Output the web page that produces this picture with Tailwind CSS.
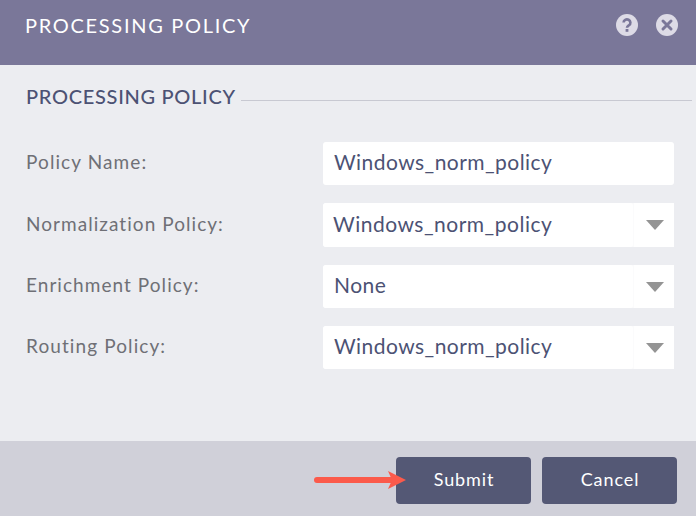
<!DOCTYPE html>
<html lang="en">
<head>
  <meta charset="UTF-8"/>
  <title>Processing Policy</title>
  <script src="https://cdn.jsdelivr.net/npm/@tailwindcss/browser@4"></script>
</head>
<body class="w-[696px] h-[516px] overflow-hidden bg-[#ecedf1] font-['Lato',sans-serif] flex flex-col">

  <!-- Header -->
  <header class="h-[65px] shrink-0 bg-[#7a7799] flex items-center justify-between pl-[25px] pr-[18px] pb-[16px]">
    <h1 class="text-[20px] leading-none text-white tracking-[1.7px]">PROCESSING POLICY</h1>
    <div class="flex items-center gap-[18px]">
      <svg class="w-[22px] h-[22px]" viewBox="0 0 22 22">
        <circle cx="11" cy="11" r="11" fill="#dddbe6"/>
        <path d="M7.6 8.6a3.4 3.2 0 1 1 5.4 2.6c-1.2.8-2 1.2-2 2.6" fill="none" stroke="#7a7799" stroke-width="2.6"/>
        <rect x="9.6" y="15" width="2.8" height="2.8" fill="#7a7799"/>
      </svg>
      <svg class="w-[22px] h-[22px]" viewBox="0 0 22 22">
        <circle cx="11" cy="11" r="11" fill="#dddbe6"/>
        <path d="M7 7l8 8M15 7l-8 8" fill="none" stroke="#7a7799" stroke-width="3" stroke-linecap="round"/>
      </svg>
    </div>
  </header>

  <!-- Form -->
  <main class="flex-1 pl-[26px] pr-[4px]">
    <div class="flex items-start h-[77px] pt-[20px]">
      <h2 class="text-[20px] leading-[23px] text-[#4c5274] font-medium tracking-[0.7px] whitespace-nowrap">PROCESSING POLICY</h2>
      <div class="flex-1 h-px bg-[#c8c9d2] ml-[5px] mt-[15px]"></div>
    </div>

    <div class="flex flex-col gap-[18px] pr-[18px]">
      <div class="flex items-center h-[43px]">
        <label class="w-[297px] text-[19px] leading-[24px] pb-[3px] text-[#6f7076] tracking-[1.1px]">Policy Name:</label>
        <div class="w-[351px] h-full bg-white rounded-[3px] flex items-center pl-[11px] pb-[3px] text-[21px] text-[#4c5274] tracking-[0.45px]">Windows_norm_policy</div>
      </div>
      <div class="flex items-center h-[44px]">
        <label class="w-[297px] text-[19px] leading-[24px] pb-[3px] text-[#6f7076] tracking-[1.05px]">Normalization Policy:</label>
        <div class="w-[351px] h-full bg-[#fbfbfc] rounded-l-[3px] flex">
          <div class="w-[310px] h-full bg-white rounded-[3px] flex items-center pl-[10px] pb-[3px] text-[21px] text-[#4c5274] tracking-[0.5px]">Windows_norm_policy</div>
          <div class="w-[40px] h-full ml-px bg-white flex items-center justify-center pl-[2px]">
            <svg class="w-[18px] h-[10px]" viewBox="0 0 18 10"><path d="M0 0h18L9 10z" fill="#949494"/></svg>
          </div>
        </div>
      </div>
      <div class="flex items-center h-[43px]">
        <label class="w-[297px] text-[19px] leading-[24px] pb-[3px] text-[#6f7076] tracking-[1.05px]">Enrichment Policy:</label>
        <div class="w-[351px] h-full bg-[#fbfbfc] rounded-l-[3px] flex">
          <div class="w-[310px] h-full bg-white rounded-[3px] flex items-center pl-[11px] pb-[3px] text-[21px] text-[#4c5274] tracking-[0.45px]">None</div>
          <div class="w-[40px] h-full ml-px bg-white flex items-center justify-center pl-[2px]">
            <svg class="w-[18px] h-[10px]" viewBox="0 0 18 10"><path d="M0 0h18L9 10z" fill="#949494"/></svg>
          </div>
        </div>
      </div>
      <div class="flex items-center h-[43px]">
        <label class="w-[297px] text-[19px] leading-[24px] pb-[3px] text-[#6f7076] tracking-[1.1px]">Routing Policy:</label>
        <div class="w-[351px] h-full bg-[#fbfbfc] rounded-l-[3px] flex">
          <div class="w-[310px] h-full bg-white rounded-[3px] flex items-center pl-[11px] pb-[3px] text-[21px] text-[#4c5274] tracking-[0.45px]">Windows_norm_policy</div>
          <div class="w-[40px] h-full ml-px bg-white flex items-center justify-center pl-[2px]">
            <svg class="w-[18px] h-[10px]" viewBox="0 0 18 10"><path d="M0 0h18L9 10z" fill="#949494"/></svg>
          </div>
        </div>
      </div>
    </div>
  </main>

  <!-- Footer -->
  <footer class="relative h-[75px] shrink-0 bg-[#d0d0d9] flex items-start justify-end gap-[11px] pt-[16px] pr-[19px]">
    <button class="w-[135px] h-[47px] pb-[2px] pl-[1px] rounded-[4px] bg-[#545875] text-white text-[18px] tracking-[0.9px]">Submit</button>
    <button class="w-[135px] h-[47px] pb-[2px] pl-[1px] rounded-[4px] bg-[#545875] text-white text-[18px] tracking-[0.9px]">Cancel</button>
    <!-- arrow annotation -->
    <svg class="absolute left-[314px] top-[30px] w-[92px] h-[18px]" viewBox="0 0 92 18">
      <path d="M3 9H78" fill="none" stroke="#fb5a4b" stroke-width="6" stroke-linecap="round"/>
      <path d="M74 0L92 9L74 18L78 9z" fill="#fb5a4b"/>
    </svg>
  </footer>
</body>
</html>
